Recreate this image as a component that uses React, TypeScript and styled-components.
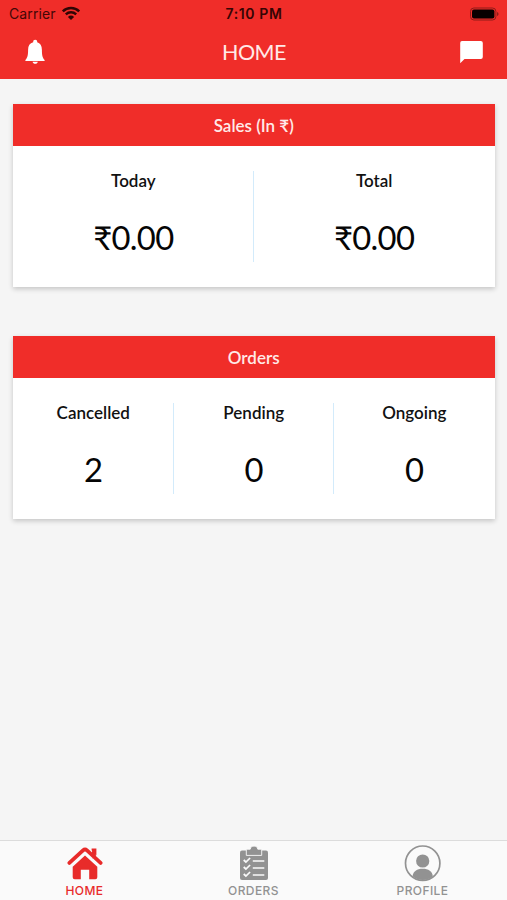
import React from "react";
import styled, { createGlobalStyle } from "styled-components";

const RED = "#f02d29";

const GlobalStyle = createGlobalStyle`
  * { box-sizing: border-box; }
  body { margin: 0; background: #f5f5f5; font-family: Lato, sans-serif; }
`;

const Screen = styled.div`
  display: flex;
  flex-direction: column;
  width: 100%;
  height: 900px;
  overflow: hidden;
  background: #f5f5f5;
`;

const TopArea = styled.header`
  height: 79px;
  flex: none;
  background: ${RED};
`;

const StatusBar = styled.div`
  display: grid;
  grid-template-columns: 1fr auto 1fr;
  align-items: center;
  height: 27px;
  padding: 0 8px 0 9px;
  font-family: Inter, sans-serif;
  font-size: 14px;
  color: #430706;
`;

const Carrier = styled.div`
  display: flex;
  align-items: center;
  gap: 5px;
  letter-spacing: 0.1px;
`;

const Clock = styled.div`
  font-size: 14px;
  font-weight: 600;
  letter-spacing: 0.6px;
  color: #360504;
`;

const Battery = styled.svg`
  justify-self: end;
`;

const NavBar = styled.div`
  display: grid;
  grid-template-columns: 1fr auto 1fr;
  align-items: center;
  height: 50px;
  padding: 0 24px 0 25px;

  svg:last-child { justify-self: end; }
`;

const Title = styled.h1`
  margin: 0;
  font-size: 21.5px;
  line-height: 26px;
  font-weight: 400;
  letter-spacing: -0.5px;
  color: #ffe9e7;
`;

const Content = styled.main`
  display: flex;
  flex-direction: column;
  flex: 1;
  gap: 48.5px;
  padding: 24.5px 12.5px 0 13px;
`;

const Card = styled.section`
  height: 183.5px;
  background: #fff;
  box-shadow: 0 2px 5px rgba(0, 0, 0, 0.2);
`;

const CardHeader = styled.h2`
  display: flex;
  align-items: center;
  justify-content: center;
  height: 42.5px;
  margin: 0;
  padding-top: 1px;
  background: ${RED};
  color: #ffeae8;
  font-size: 17px;
  font-weight: 600;
`;

const Stats = styled.div<{ $columns: number }>`
  display: grid;
  grid-template-columns: repeat(${(p) => p.$columns}, 1fr);
  padding-top: 25px;
`;

const Stat = styled.div`
  display: flex;
  flex-direction: column;
  align-items: center;
  height: 91px;

  & + & { box-shadow: -1px 0 0 #d3ebfb; }
`;

const Label = styled.div`
  height: 20px;
  font-size: 17px;
  line-height: 20px;
  font-weight: 600;
  color: #111;
`;

const Value = styled.div`
  margin-top: 27px;
  font-size: 32.8px;
  line-height: 40px;
  letter-spacing: -0.7px;
  color: #050505;
`;

const TabBar = styled.nav`
  display: grid;
  grid-template-columns: repeat(3, 1fr);
  height: 60px;
  flex: none;
  border-top: 1px solid #dcdcdc;
  background: #fafafa;
`;

const Tab = styled.div<{ $active?: boolean }>`
  display: flex;
  flex-direction: column;
  align-items: center;
  gap: 1px;
  padding-top: 3px;
  color: ${(p) => (p.$active ? "#e82b2a" : "#929292")};
  font-family: Inter, sans-serif;
  font-size: 12px;
  line-height: 16px;
  font-weight: 500;
  letter-spacing: 0.4px;
`;

const Wifi = () => (
  <svg width="20" height="15" viewBox="0 0 20 15" fill="none" stroke="#300504">
    <path d="M1.8 5.3a11.7 11.7 0 0 1 16.4 0" strokeWidth="2.5" />
    <path d="M4.8 8.4a7.5 7.5 0 0 1 10.4 0" strokeWidth="2.4" />
    <path d="M10 14.1 6.9 11a4.5 4.5 0 0 1 6.2 0Z" fill="#300504" stroke="none" />
  </svg>
);

const BatteryIcon = () => (
  <Battery width="30" height="14" viewBox="0 0 30 14">
    <rect x="1.5" y="1" width="25.4" height="12" rx="3.4" fill="none" stroke="#8e1c19" />
    <rect x="3" y="2.5" width="22.4" height="9" rx="2" fill="#080000" />
    <path d="M28 5v4q1.6-.6 1.6-2t-1.6-2Z" fill="#8e1c19" />
  </Battery>
);

const Bell = () => (
  <svg width="21" height="26" viewBox="0 0 21 26" fill="#fff">
    <path d="M10.2.8C8.9.8 8.2 1.6 8.2 2.8v.5C4.8 4.1 3.1 6.9 3.1 10.7c0 5.7-.7 8-2.7 10.3v.9h19.2V21c-2-2.3-2.7-4.6-2.7-10.3 0-3.8-1.7-6.6-4.7-7.4v-.5c0-1.2-.7-2-2-2ZM7.6 22.7c.3 1.4 1.2 2.1 2.6 2.1s2.3-.7 2.6-2.1Z" />
  </svg>
);

const Chat = () => (
  <svg width="23" height="24" viewBox="0 0 23 24" fill="#fff">
    <path d="M2 1h18.8a2 2 0 0 1 2 2v14a2 2 0 0 1-2 2H4.5L.2 23.2V3A2 2 0 0 1 2 1Z" />
  </svg>
);

const HomeIcon = () => (
  <svg width="36" height="38" viewBox="0 0 36 38">
    <path d="M24.6 4.6h4.8v10l-4.8-4.4ZM18 11.5l12.3 11.2v10.5q0 2-2 2h-6.1v-9.4h-8.4v9.4H7.7q-2 0-2-2V22.7Z" fill="currentColor" />
    <path d="M2.4 19.3 16.2 6.4q1.8-1.6 3.6 0l13.8 12.9" fill="none" stroke="#fafafa" strokeWidth="6.2" />
    <path d="M2.4 18.9 16 6.3q2-1.8 4 0l13.6 12.6M27 7v6" fill="none" stroke="currentColor" strokeWidth="3.8" strokeLinecap="round" />
  </svg>
);

const OrdersIcon = () => (
  <svg width="36" height="38" viewBox="0 0 36 38" fill="currentColor">
    <path d="M6 6.5h24q2 0 2 2V34q0 2-2 2H6q-2 0-2-2V8.5q0-2 2-2Z" />
    <path d="M10.3 11.4V5.2h3.9C14.7 2.8 16 2.1 18 2.1s3.3.7 3.8 3.1h3.9v6.2Z" stroke="#fafafa" strokeWidth="0.9" />
    <g fill="none" stroke="#fafafa" strokeWidth="1.7">
      <path d="m7.7 16 2.2 2 4.2-4m-6.4 9 2.2 2 4.2-4m-6.4 9 2.2 2 4.2-4" />
      <path d="M16.8 17h11.5M16.8 24h11.5M16.8 31h11.5" />
    </g>
  </svg>
);

const ProfileIcon = () => (
  <svg width="38" height="38" viewBox="0 0 38 38">
    <circle cx="18.7" cy="19.2" r="17.2" fill="none" stroke="currentColor" strokeWidth="1.7" />
    <circle cx="18.7" cy="17" r="6.6" fill="currentColor" />
    <path d="M8.6 32.2c.4-5 4.4-7.5 10.1-7.5s9.7 2.5 10.1 7.5Q24.8 36 18.7 36T8.6 32.2Z" fill="currentColor" />
  </svg>
);

type StatItem = { label: string; value: string };

const sales: StatItem[] = [
  { label: "Today", value: "₹0.00" },
  { label: "Total", value: "₹0.00" },
];

const orders: StatItem[] = [
  { label: "Cancelled", value: "2" },
  { label: "Pending", value: "0" },
  { label: "Ongoing", value: "0" },
];

const StatCard = ({ title, items }: { title: string; items: StatItem[] }) => (
  <Card>
    <CardHeader>{title}</CardHeader>
    <Stats $columns={items.length}>
      {items.map((item) => (
        <Stat key={item.label}>
          <Label>{item.label}</Label>
          <Value>{item.value}</Value>
        </Stat>
      ))}
    </Stats>
  </Card>
);

export default function App() {
  return (
    <>
      <GlobalStyle />
      <Screen>
        <TopArea>
          <StatusBar>
            <Carrier>Carrier <Wifi /></Carrier>
            <Clock>7:10 PM</Clock>
            <BatteryIcon />
          </StatusBar>
          <NavBar>
            <Bell />
            <Title>HOME</Title>
            <Chat />
          </NavBar>
        </TopArea>
        <Content>
          <StatCard title="Sales (In ₹)" items={sales} />
          <StatCard title="Orders" items={orders} />
        </Content>
        <TabBar>
          <Tab $active><HomeIcon />HOME</Tab>
          <Tab><OrdersIcon />ORDERS</Tab>
          <Tab><ProfileIcon />PROFILE</Tab>
        </TabBar>
      </Screen>
    </>
  );
}
